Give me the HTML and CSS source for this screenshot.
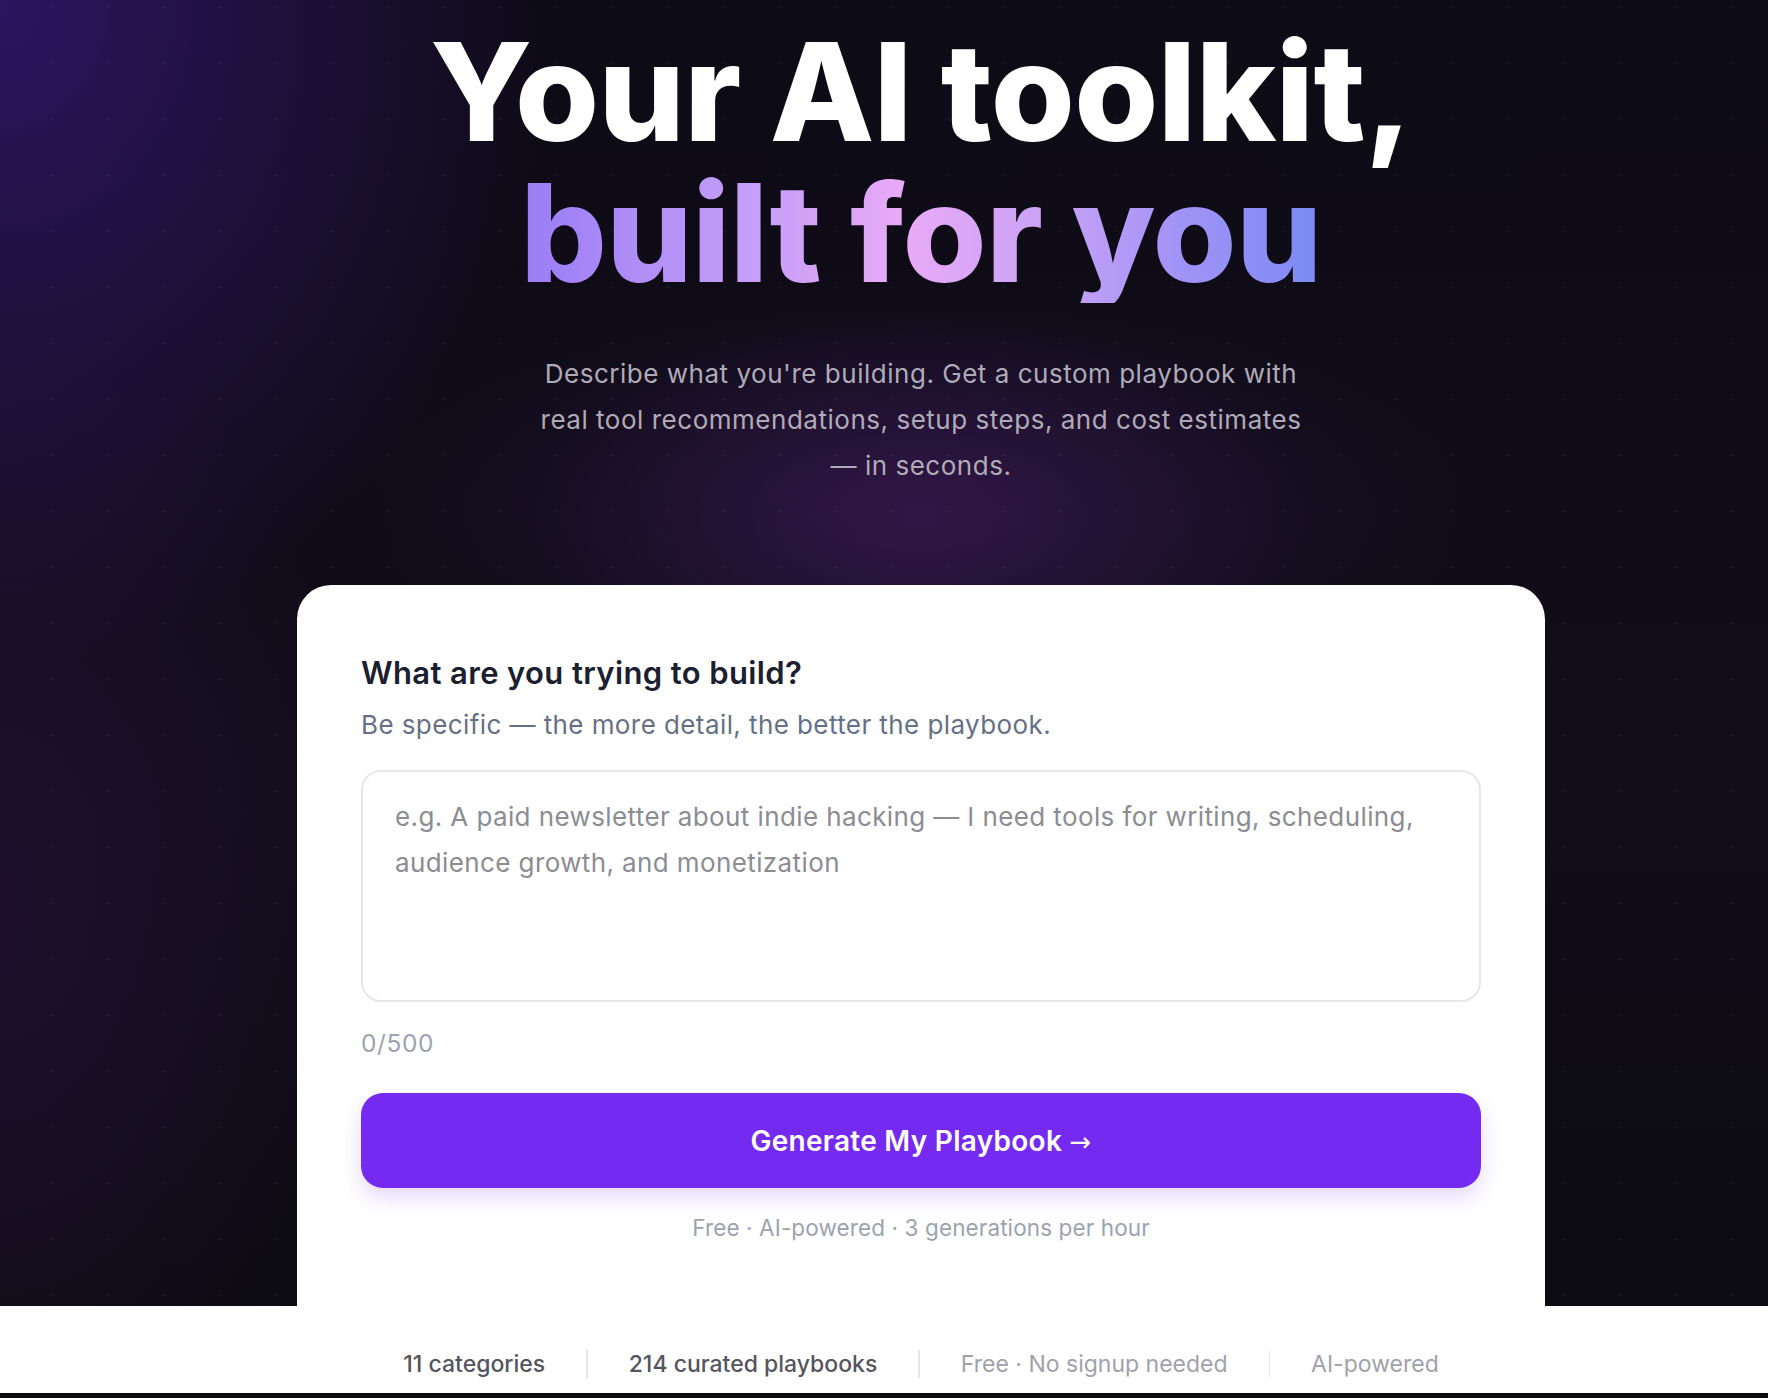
FILE: index.html
```html
<!DOCTYPE html>
<html lang="en">
<head>
<meta charset="utf-8">
<title>Your AI toolkit, built for you</title>
<link rel="stylesheet" href="styles.css">
</head>
<body>
<main class="hero">
  <h1 class="title">
    <span class="title-line">Your AI toolkit,</span>
    <span class="title-line title-grad">built for you</span>
  </h1>
  <p class="lead">Describe what you're building. Get a custom playbook with real tool recommendations, setup steps, and cost estimates — in seconds.</p>
  <section class="card">
    <h2 class="card-title">What are you trying to build?</h2>
    <p class="card-sub">Be specific — the more detail, the better the playbook.</p>
    <textarea class="input" placeholder="e.g. A paid newsletter about indie hacking — I need tools for writing, scheduling, audience growth, and monetization"></textarea>
    <div class="count">0/500</div>
    <button class="cta" type="button">Generate My Playbook <span class="arrow">→</span></button>
    <p class="note">Free · AI-powered · 3 generations per hour</p>
  </section>
</main>
<section class="stats">
  <span class="stat stat-strong">11 categories</span>
  <span class="sep"></span>
  <span class="stat stat-strong">214 curated playbooks</span>
  <span class="sep"></span>
  <span class="stat">Free · No signup needed</span>
  <span class="sep"></span>
  <span class="stat">AI-powered</span>
</section>
<footer class="strip"></footer>
</body>
</html>
```

FILE: styles.css
```css
html, body {
  margin: 0;
  padding: 0;
}

body {
  font-family: Inter, "Noto Sans", "Liberation Sans", sans-serif;
  background: #ffffff;
  color: #1a1f2e;
}

.hero {
  display: flex;
  flex-direction: column;
  align-items: center;
  padding: 21px 0 0 74px;
  background-color: #0c0b13;
  background-image:
    radial-gradient(circle, rgba(255, 255, 255, 0.06) 1.2px, transparent 1.6px),
    radial-gradient(ellipse 560px 300px at 52% 40%, rgba(70, 30, 100, 0.45), transparent 70%),
    radial-gradient(ellipse 760px 280px at 52% 38%, rgba(60, 25, 90, 0.35), transparent 75%),
    radial-gradient(ellipse 800px 950px at 0% 0%, rgba(52, 22, 110, 0.85), transparent 70%),
    radial-gradient(ellipse 520px 900px at 0% 70%, rgba(40, 18, 60, 0.6), transparent 70%),
    linear-gradient(180deg, #0d0b15 0%, #110d1a 60%, #0c0b12 100%);
  background-size: 56px 56px, auto, auto, auto, auto, auto;
  background-position: 25px 35px, 0 0, 0 0, 0 0, 0 0, 0 0;
}

.title {
  margin: 0;
  display: flex;
  flex-direction: column;
  align-items: center;
  font-size: 136px;
  line-height: 141px;
  font-weight: 800;
  letter-spacing: -0.005em;
  color: #ffffff;
  text-align: center;
}

.title-line {
  display: inline-block;
  white-space: nowrap;
}

.title-grad {
  background-image: linear-gradient(90deg, #9a7cf5 0%, #c39ef8 28%, #e8aaf6 48%, #c9a2f7 66%, #a293f6 82%, #7a89f4 100%);
  -webkit-background-clip: text;
  background-clip: text;
  color: transparent;
}

.lead {
  margin: 48px 0 0;
  max-width: 790px;
  font-size: 26px;
  line-height: 46px;
  letter-spacing: 0.02em;
  color: #b0aab8;
  text-align: center;
}

.card {
  box-sizing: border-box;
  width: 1248px;
  margin: 96px 0 -40px;
  padding: 70px 64px 103px;
  background: #ffffff;
  border-radius: 34px;
  display: flex;
  flex-direction: column;
}

.card-title {
  margin: 0;
  font-size: 31px;
  line-height: 36px;
  font-weight: 600;
  color: #1b2030;
  letter-spacing: 0.012em;
}

.card-sub {
  margin: 16px 0 0;
  font-size: 26px;
  line-height: 36px;
  letter-spacing: 0.016em;
  color: #667085;
}

.input {
  box-sizing: border-box;
  display: block;
  width: 100%;
  height: 232px;
  margin: 27px 0 0;
  padding: 22px 32px;
  border: 2px solid #e6e7ea;
  border-radius: 20px;
  font-family: Inter, "Noto Sans", "Liberation Sans", sans-serif;
  font-size: 26px;
  line-height: 46px;
  letter-spacing: 0.015em;
  color: #1b2030;
  background: #ffffff;
  resize: none;
  outline: none;
}

.input::placeholder {
  color: #8c8c93;
}

.count {
  margin-top: 26px;
  font-size: 24.5px;
  line-height: 30px;
  letter-spacing: 0.025em;
  color: #9ca3af;
}

.cta {
  display: block;
  width: 100%;
  height: 95px;
  margin-top: 35px;
  border: 0;
  border-radius: 22px;
  background: #752af2;
  color: #ffffff;
  font-family: Inter, "Noto Sans", "Liberation Sans", sans-serif;
  font-size: 28px;
  font-weight: 600;
  letter-spacing: 0.01em;
  box-shadow: 0 10px 22px rgba(117, 42, 242, 0.18);
  cursor: pointer;
}

.arrow {
  font-family: "DejaVu Sans", sans-serif;
  font-weight: 400;
  font-size: 26px;
}

.note {
  margin: 25px 0 0;
  font-size: 22.5px;
  line-height: 30px;
  letter-spacing: 0.005em;
  color: #9ca3af;
  text-align: center;
}

.stats {
  display: flex;
  justify-content: center;
  align-items: center;
  gap: 41px;
  padding: 43px 0 14px 74px;
  background: #ffffff;
  font-size: 23px;
  line-height: 30px;
}

.stat {
  color: #a1a1aa;
  white-space: nowrap;
}

.stat-strong {
  color: #55555e;
  font-weight: 500;
}

.sep {
  width: 1.5px;
  height: 28px;
  background: #e5e5ea;
}

.strip {
  height: 40px;
  background: #0c0b12;
}
```
